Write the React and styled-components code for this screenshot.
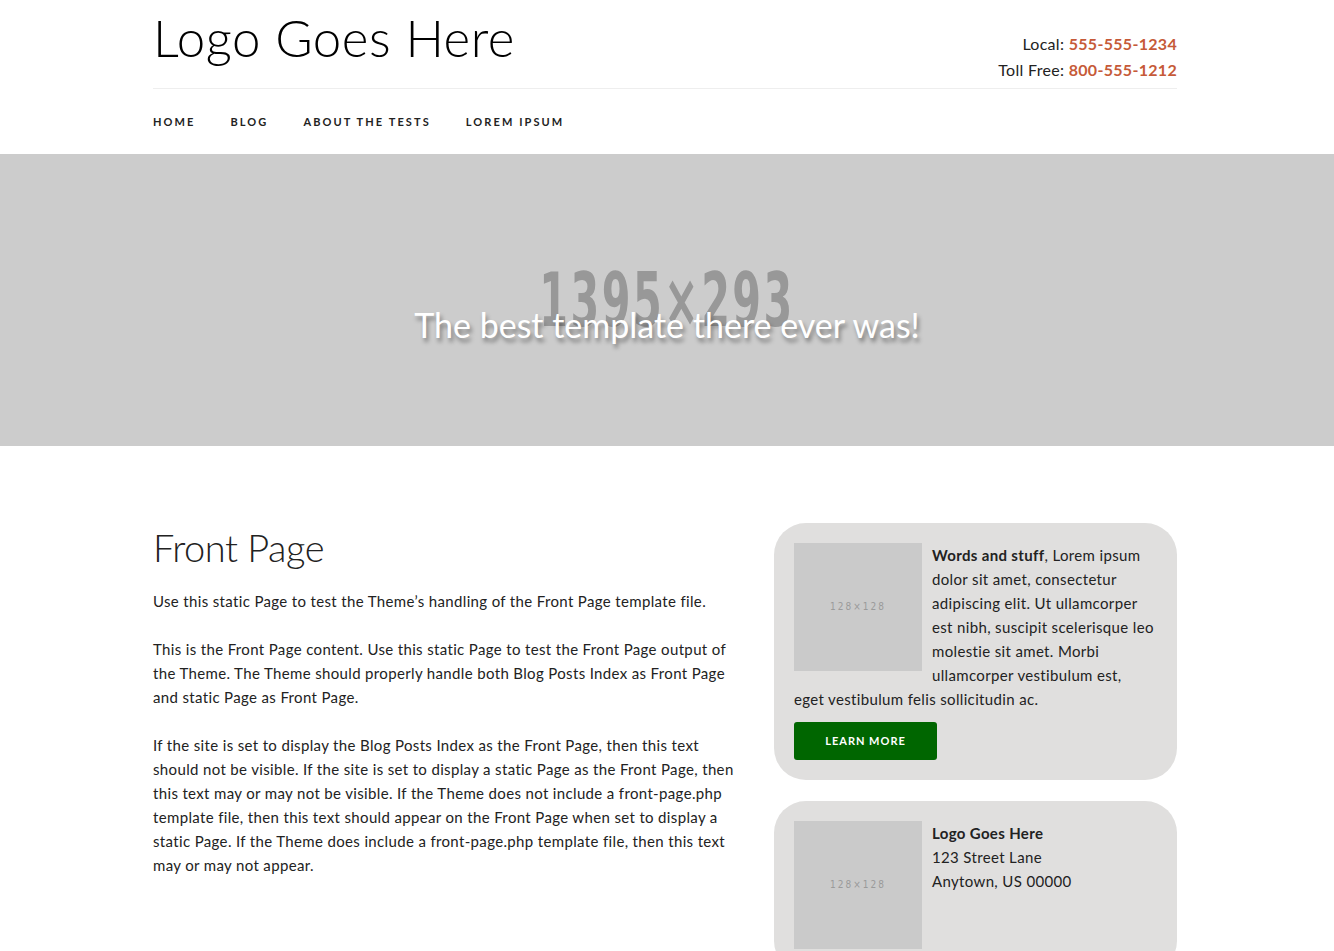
import styled, { createGlobalStyle } from "styled-components";

const GlobalStyle = createGlobalStyle`
  html, body {
    margin: 0;
    padding: 0;
    background: #fff;
  }
  body {
    font-family: 'Lato', 'Open Sans', sans-serif;
    color: #222;
  }
  * { box-sizing: border-box; }
`;

const Container = styled.div`
  width: 1028px;
  padding-right: 4px;
  margin: 0 auto;
`;

const Header = styled.header`
  display: flex;
  justify-content: space-between;
  align-items: flex-end;
  height: 89px;
  border-bottom: 1px solid #eee;
`;

const Logo = styled.div`
  font-family: 'Lato', sans-serif;
  font-weight: 300;
  font-size: 51px;
  line-height: 1;
  color: #000;
  align-self: flex-start;
  margin-top: 12px;
  letter-spacing: 0.5px;
`;

const Phones = styled.div`
  text-align: right;
  font-size: 16px;
  line-height: 26px;
  color: #222;
  padding-bottom: 5px;
  letter-spacing: 0.3px;
`;

const Phone = styled.span`
  color: #c65a38;
  font-weight: 700;
`;

const Nav = styled.nav`
  display: flex;
  gap: 35px;
  height: 65px;
  align-items: center;
`;

const NavLink = styled.a`
  font-size: 11px;
  font-weight: 700;
  letter-spacing: 2.1px;
  text-transform: uppercase;
  color: #222;
  text-decoration: none;
`;

const Hero = styled.section`
  position: relative;
  height: 292px;
  background: #cccccc;
  display: flex;
  align-items: center;
  justify-content: center;
  overflow: hidden;
`;

const HeroPlaceholder = styled.span`
  font-family: 'DejaVu Sans Condensed', 'Roboto', sans-serif;
  font-size: 74px;
  font-weight: 700;
  color: #989898;
  letter-spacing: 4px;
  transform: scaleX(0.62);
`;

const Tagline = styled.h2`
  position: absolute;
  left: 0;
  right: 0;
  top: 150px;
  margin: 0;
  text-align: center;
  font-weight: 400;
  font-size: 34px;
  color: #fff;
  letter-spacing: 0;
  text-shadow: 2px 4px 4px rgba(0, 0, 0, 0.4);
`;

const Main = styled.main`
  display: grid;
  grid-template-columns: 582px 403px;
  justify-content: space-between;
  padding-top: 77px;
`;

const Article = styled.article`
  font-size: 15px;
  line-height: 24px;
  letter-spacing: 0.35px;
  color: #222;

  p {
    margin: 0 0 24px;
  }
`;

const Title = styled.h1`
  font-weight: 300;
  font-size: 38px;
  line-height: 48px;
  margin: 0 0 18px;
  color: #222;
  letter-spacing: -0.5px;
`;

const Sidebar = styled.aside`
  display: flex;
  flex-direction: column;
  gap: 21px;
`;

const Card = styled.div`
  background: #e0dfde;
  border-radius: 32px;
  padding: 20px 22px 20px 20px;
  font-size: 15px;
  line-height: 24px;
  letter-spacing: 0.35px;
  color: #222;
  min-height: ${(p) => p.$minH || 0}px;
`;

const Thumb = styled.div`
  float: left;
  width: 128px;
  height: 128px;
  margin: 0 10px 4px 0;
  background: #cacaca;
  display: flex;
  align-items: center;
  justify-content: center;
  font-family: 'DejaVu Sans Condensed', 'Roboto', sans-serif;
  font-size: 10px;
  letter-spacing: 2px;
  color: #9a9a9a;
`;

const CardText = styled.p`
  margin: 0;
`;

const Strong = styled.strong`
  font-weight: 700;
`;

const Button = styled.a`
  clear: both;
  display: inline-flex;
  align-items: center;
  justify-content: center;
  width: 143px;
  height: 38px;
  margin-top: 11px;
  background: #006600;
  border-radius: 3px;
  color: #fff;
  font-size: 11px;
  font-weight: 700;
  letter-spacing: 1px;
  text-transform: uppercase;
  text-decoration: none;
`;

const Clear = styled.div`
  clear: both;
`;

export default function App() {
  return (
    <>
      <GlobalStyle />
      <Container>
        <Header>
          <Logo>Logo Goes Here</Logo>
          <Phones>
            <div>
              Local: <Phone>555-555-1234</Phone>
            </div>
            <div>
              Toll Free: <Phone>800-555-1212</Phone>
            </div>
          </Phones>
        </Header>
        <Nav>
          <NavLink href="#">Home</NavLink>
          <NavLink href="#">Blog</NavLink>
          <NavLink href="#">About The Tests</NavLink>
          <NavLink href="#">Lorem Ipsum</NavLink>
        </Nav>
      </Container>

      <Hero>
        <HeroPlaceholder>1395×293</HeroPlaceholder>
        <Tagline>The best template there ever was!</Tagline>
      </Hero>

      <Container>
        <Main>
          <Article>
            <Title>Front Page</Title>
            <p>Use this static Page to test the Theme’s handling of the Front Page template file.</p>
            <p>
              This is the Front Page content. Use this static Page to test the Front Page output of
              the Theme. The Theme should properly handle both Blog Posts Index as Front Page and
              static Page as Front Page.
            </p>
            <p>
              If the site is set to display the Blog Posts Index as the Front Page, then this text
              should not be visible. If the site is set to display a static Page as the Front Page,
              then this text may or may not be visible. If the Theme does not include a
              front-page.php template file, then this text should appear on the Front Page when set
              to display a static Page. If the Theme does include a front-page.php template file,
              then this text may or may not appear.
            </p>
          </Article>

          <Sidebar>
            <Card>
              <Thumb>128×128</Thumb>
              <CardText>
                <Strong>Words and stuff</Strong>, Lorem ipsum dolor sit amet, consectetur
                adipiscing elit. Ut ullamcorper est nibh, suscipit scelerisque leo molestie sit
                amet. Morbi ullamcorper vestibulum est, eget vestibulum felis sollicitudin ac.
              </CardText>
              <Button href="#">Learn More</Button>
            </Card>
            <Card $minH={170}>
              <Thumb>128×128</Thumb>
              <CardText>
                <Strong>Logo Goes Here</Strong>
                <br />
                123 Street Lane
                <br />
                Anytown, US 00000
              </CardText>
              <Clear />
            </Card>
          </Sidebar>
        </Main>
      </Container>
    </>
  );
}
